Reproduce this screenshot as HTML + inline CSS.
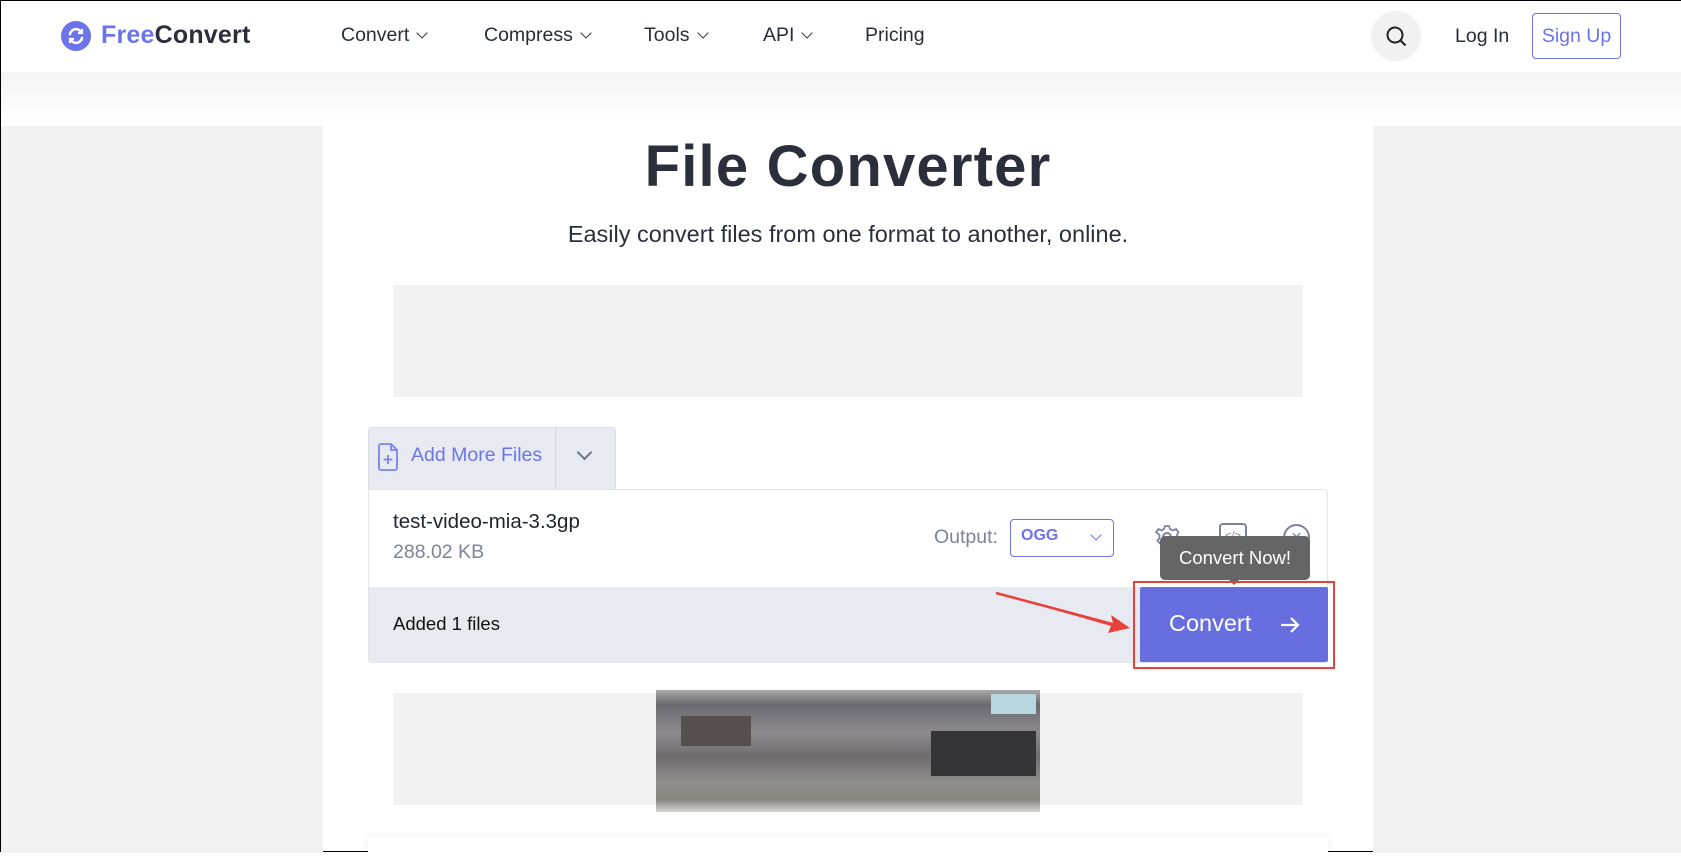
<!DOCTYPE html>
<html><head><meta charset="utf-8"><style>
*{margin:0;padding:0;box-sizing:border-box}
body{width:1681px;height:852px;overflow:hidden;background:#fff;font-family:"Liberation Sans",sans-serif;position:relative;border:1px solid #000;color:#272d3a}
.abs{position:absolute}
.nav{left:0;top:0;width:1681px;height:71px;background:#fff;box-shadow:0 4px 12px rgba(0,0,0,.04)}
.grad{left:0;top:71px;width:1681px;height:54px;background:linear-gradient(#f5f5f5,#fff)}
.navi{font-size:19.5px;color:#272d3a;top:23px}
.chev{display:inline-block;width:8px;height:8px;border-right:1.6px solid #333;border-bottom:1.6px solid #333;transform:rotate(45deg);margin-left:9px;position:relative;top:-4px}
</style></head><body>
<div class="abs nav"></div>
<div class="abs grad"></div>
<div class="abs" style="left:0;top:125px;width:322px;height:727px;background:#f2f2f2"></div>
<div class="abs" style="left:1372px;top:125px;width:309px;height:727px;background:#f2f2f2"></div>
<svg class="abs" style="left:60px;top:20px" width="30" height="30" viewBox="0 0 30 30"><circle cx="15" cy="15" r="15" fill="#6c74ea"/><path d="M9 13a6 6 0 0 1 11-2M21 17a6 6 0 0 1-11 2" stroke="#fff" stroke-width="2.6" fill="none" stroke-linecap="round"/><path d="M21 8v4h-4M9 22v-4h4" stroke="#fff" stroke-width="2.2" fill="none"/></svg>
<div class="abs" style="left:100px;top:20px;font-size:25px;font-weight:bold;letter-spacing:.2px"><span style="color:#6c74ea">Free</span><span style="color:#2a2f3b">Convert</span></div>
<div class="abs navi" style="left:340px">Convert<span class="chev"></span></div>
<div class="abs navi" style="left:483px">Compress<span class="chev"></span></div>
<div class="abs navi" style="left:643px">Tools<span class="chev"></span></div>
<div class="abs navi" style="left:762px">API<span class="chev"></span></div>
<div class="abs navi" style="left:864px">Pricing</div>
<div class="abs" style="left:1370px;top:10px;width:50px;height:50px;border-radius:50%;background:#f1f1f1"></div>
<svg class="abs" style="left:1384px;top:24px" width="24" height="24" viewBox="0 0 24 24"><circle cx="10" cy="10" r="7.5" stroke="#222" stroke-width="2" fill="none"/><path d="M15.5 15.5l5 5" stroke="#222" stroke-width="2"/></svg>
<div class="abs" style="left:1454px;top:24px;font-size:19.5px">Log In</div>
<div class="abs" style="left:1531px;top:12px;width:89px;height:46px;border:1px solid #6c74ea;border-radius:4px;color:#6c74ea;font-size:19.5px;text-align:center;line-height:44px">Sign Up</div>

<div class="abs" style="left:322px;top:132px;width:1050px;text-align:center;font-size:58px;font-weight:bold;color:#2a2f3b;letter-spacing:1.2px">File Converter</div>
<div class="abs" style="left:322px;top:220px;width:1050px;text-align:center;font-size:23.5px;color:#2a2f3b">Easily convert files from one format to another, online.</div>
<div class="abs" style="left:392px;top:284px;width:910px;height:112px;background:#f2f2f2"></div>

<div class="abs" style="left:367px;top:426px;width:248px;height:63px;background:#e8eaf2;border:1px solid #dcdfe8;border-bottom:none;border-radius:4px 4px 0 0"></div>
<div class="abs" style="left:554px;top:426px;width:1px;height:62px;background:#d6d9e2"></div>
<svg class="abs" style="left:376px;top:442px" width="22" height="28" viewBox="0 0 22 28"><path d="M2 3a2 2 0 0 1 2-2h10l6 6v18a2 2 0 0 1-2 2H4a2 2 0 0 1-2-2z M14 1v6h6" stroke="#7a82ee" stroke-width="1.8" fill="none"/><path d="M11 12v9M6.5 16.5h9" stroke="#7a82ee" stroke-width="1.8"/></svg>
<div class="abs" style="left:410px;top:443px;font-size:19.5px;color:#6c74ea">Add More Files</div>
<div class="abs" style="left:578px;top:446px;width:11px;height:11px;border-right:2px solid #6b7489;border-bottom:2px solid #6b7489;transform:rotate(45deg)"></div>

<div class="abs" style="left:367px;top:488px;width:960px;height:174px;border:1px solid #e2e4ea;border-radius:0 4px 4px 4px;background:#fff;overflow:hidden">
<div class="abs" style="left:0;top:97px;width:960px;height:77px;background:#e8eaf2"></div>
</div>
<div class="abs" style="left:392px;top:509px;font-size:20.5px;color:#1f2430">test-video-mia-3.3gp</div>
<div class="abs" style="left:392px;top:540px;font-size:19.5px;color:#7b849b">288.02 KB</div>
<div class="abs" style="left:392px;top:612px;font-size:18.5px;color:#111">Added 1 files</div>
<div class="abs" style="left:933px;top:525px;font-size:19.5px;color:#7b849b">Output:</div>
<div class="abs" style="left:1009px;top:518px;width:104px;height:38px;border:1px solid #6c74ea;border-radius:4px"></div>
<div class="abs" style="left:1020px;top:526px;font-size:16px;font-weight:bold;color:#6c74ea">OGG</div>
<div class="abs" style="left:1091px;top:530px;width:8px;height:8px;border-right:1.6px solid #6c74ea;border-bottom:1.6px solid #6c74ea;transform:rotate(45deg)"></div>
<svg class="abs" style="left:1152px;top:522px" width="28" height="28" viewBox="0 0 28 28"><circle cx="14" cy="14" r="4" stroke="#7b849b" stroke-width="2" fill="none"/><path d="M12 3h4l1 3 3 1.5 3-1.5 2.5 3-1.5 3v3l2 2.5-2.5 3-3-1-2.5 2-.5 3h-4l-1-3-2.5-2-3 1-2.5-3 2-2.5v-3L3 9l2.5-3 3 1.5L11 6z" stroke="#7b849b" stroke-width="1.8" fill="none"/></svg>
<div class="abs" style="left:1218px;top:522px;width:28px;height:28px;border:2px solid #7b849b;border-radius:4px;font-size:11px;color:#7b849b;text-align:center;line-height:22px">&lt;/&gt;</div>
<div class="abs" style="left:1282px;top:523px;width:27px;height:27px;border:2px solid #7b849b;border-radius:50%;font-size:14px;color:#7b849b;text-align:center;line-height:23px">✕</div>
<div class="abs" style="left:1159px;top:535px;width:150px;height:44px;background:#656565;border-radius:5px;color:#fff;font-size:18.5px;text-align:center;line-height:44px">Convert Now!</div>
<div class="abs" style="left:1228px;top:579px;width:0;height:0;border-left:5px solid transparent;border-right:5px solid transparent;border-top:5px solid #656565"></div>
<div class="abs" style="left:1132px;top:580px;width:202px;height:88px;border:2px solid #e8403a"></div>
<div class="abs" style="left:1139px;top:586px;width:188px;height:75px;background:#676fe0;border-radius:2px"></div>
<div class="abs" style="left:1168px;top:609px;font-size:23.5px;color:#fff">Convert</div>
<svg class="abs" style="left:1277px;top:612px" width="24" height="24" viewBox="0 0 24 24"><path d="M3 12h17M13 5l7 7-7 7" stroke="#fff" stroke-width="2.2" fill="none"/></svg>
<svg class="abs" style="left:0;top:0" width="1681" height="852"><path d="M995 592L1112 622L1110 614L1129 627L1107 632L1110 625Z" fill="#e8403a"/><path d="M995 592L1115 624" stroke="#e8403a" stroke-width="2.5"/></svg>

<div class="abs" style="left:392px;top:692px;width:910px;height:112px;background:#f2f2f2"></div>
<div class="abs" style="left:655px;top:689px;width:384px;height:122px;background:linear-gradient(180deg,#aaa 0%,#6a6a70 12%,#8c8a8c 35%,#6f6c6e 55%,#8f8f8c 75%,#8a8580 90%,#d8d8d4 100%)"></div>
<div class="abs" style="left:930px;top:730px;width:105px;height:45px;background:#353436"></div>
<div class="abs" style="left:680px;top:715px;width:70px;height:30px;background:#55504d"></div>
<div class="abs" style="left:990px;top:693px;width:45px;height:20px;background:#b7d8e0"></div>
<div class="abs" style="left:367px;top:836px;width:960px;height:20px;background:#fff;box-shadow:0 -2px 8px rgba(0,0,0,.06)"></div>
</body></html>
